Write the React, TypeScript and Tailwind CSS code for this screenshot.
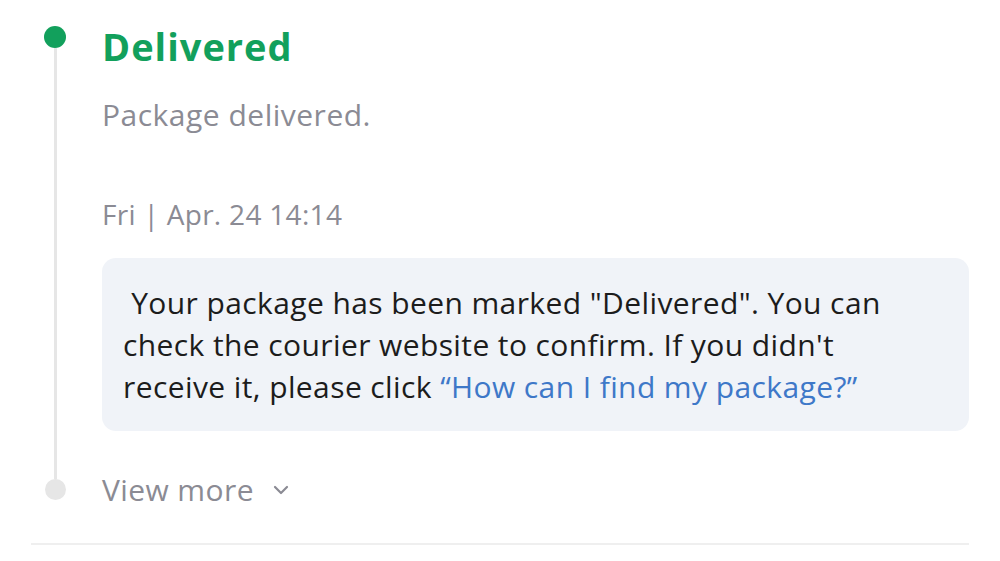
import React from "react";

export default function App() {
  return (
    <div className="w-[1000px] h-[561px] bg-white overflow-hidden" style={{ fontFamily: "'Open Sans', 'Noto Sans', sans-serif" }}>
      <div className="flex pl-[44px] pr-[31px]">
        <div className="w-[22px] flex flex-col items-center">
          <div className="mt-[26px] w-[22px] h-[22px] rounded-full bg-[#12a05c] shrink-0" />
          <div className="w-[3px] flex-1 bg-[#e6e6e6]" />
          <div className="w-[21px] h-[21px] rounded-full bg-[#e6e6e6] shrink-0" />
          <div className="h-[10px]" />
        </div>
        <div className="flex-1 ml-[36px] flex flex-col">
          <div className="mt-[22px] text-[38px] leading-[48px] tracking-[1px] font-bold text-[#12a05c]">Delivered</div>
          <div className="mt-[25px] text-[30px] leading-[40px] tracking-[0.5px] text-[#8b8b94]">Package delivered.</div>
          <div className="mt-[59px] text-[28px] leading-[40px] tracking-[0.3px] text-[#8b8b94]">Fri | Apr. 24 14:14</div>
          <div className="mt-[24px] rounded-[14px] bg-[#f0f3f8] pl-[21px] pr-[20px] pt-[24px] pb-[23px] text-[30px] leading-[42px] tracking-[0.4px] text-[#1c1c1c] whitespace-nowrap">
            &nbsp;Your package has been marked "Delivered". You can
            <br />
            check the courier website to confirm. If you didn't
            <br />
            receive it, please click{" "}
            <span className="text-[#3e78c8]">“How can I find my package?”</span>
          </div>
          <div className="mt-[39px] flex items-center gap-[18px] text-[30px] leading-[40px] tracking-[0.4px] text-[#8b8b94]">
            <span>View more</span>
            <svg width="18" height="12" viewBox="0 0 18 12" fill="none" stroke="#8b8b94" strokeWidth="2.2" strokeLinecap="round" strokeLinejoin="round">
              <path d="M3 3 L9 9 L15 3" />
            </svg>
          </div>
        </div>
      </div>
      <div className="mx-[31px] mt-[33px] h-[2px] bg-[#efefef]" />
    </div>
  );
}
